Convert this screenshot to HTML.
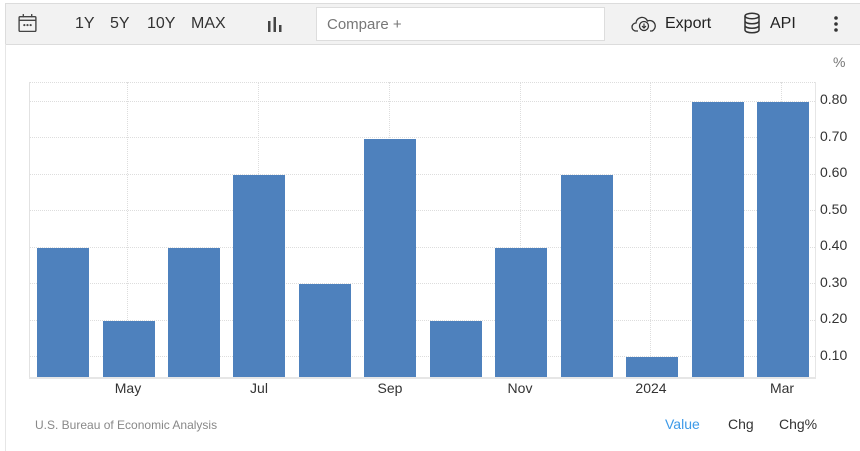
<!DOCTYPE html>
<html><head><meta charset="utf-8"><style>
*{margin:0;padding:0;box-sizing:border-box}
body{width:860px;height:451px;background:#fff;font-family:"Liberation Sans",Arial,sans-serif;position:relative;overflow:hidden}
.a{position:absolute}
.tb{left:5px;top:3px;width:855px;height:42px;background:#f2f2f2;border:1px solid #dcdcdc;border-right:none}
.panel{left:5px;top:44px;width:855px;height:407px;border-left:1px solid #e6e6e6}
.t{font-size:16px;color:#333;top:15px}
.cmp{left:316px;top:7px;width:289px;height:34px;background:#fff;border:1px solid #ddd;font-size:15px;color:#777;padding:8px 10px}
.hg{left:30px;width:785px;height:0;border-top:1px dotted #ddd}
.vg{top:82px;height:296px;width:0;border-left:1px dotted #ddd}
.bar{background:#4e81bd;width:52px}
.yl{left:820px;font-size:14px;color:#333}
.xl{top:380px;font-size:14px;color:#333;width:60px;text-align:center}
</style></head><body>
<div class="a tb"></div>
<div class="a panel"></div>
<svg class="a" style="left:17px;top:13px" width="21" height="21" viewBox="0 0 20 20" fill="none" stroke="#444" stroke-width="1.3"><rect x="2" y="3.5" width="16" height="14" rx="1"/><line x1="2" y1="7" x2="18" y2="7"/><line x1="6" y1="1" x2="6" y2="4"/><line x1="14" y1="1" x2="14" y2="4"/><circle cx="7" cy="11.5" r=".4" fill="#444"/><circle cx="10" cy="11.5" r=".4" fill="#444"/><circle cx="13" cy="11.5" r=".4" fill="#444"/></svg>
<div class="a t" style="left:75px">1Y</div>
<div class="a t" style="left:110px">5Y</div>
<div class="a t" style="left:147px">10Y</div>
<div class="a t" style="left:191px">MAX</div>
<svg class="a" style="left:266px;top:15px" width="18" height="18"><rect x="2" y="6" width="2.5" height="11" fill="#444"/><rect x="7.5" y="2" width="2.5" height="15" fill="#444"/><rect x="13" y="10" width="2.5" height="7" fill="#444"/></svg>
<div class="a cmp">Compare +</div>
<svg class="a" style="left:631px;top:14px" width="26" height="20" viewBox="0 0 26 20" fill="none" stroke="#333" stroke-width="1.3"><path d="M7 17H5a4 4 0 0 1 0-8 6 6 0 0 1 11.5-2A5 5 0 0 1 21 17h-2"/><circle cx="13" cy="12" r="4.5"/><path d="M13 9.5v4M11 12l2 2 2-2" stroke-width="1.2"/></svg>
<div class="a t" style="left:665px;color:#222">Export</div>
<svg class="a" style="left:742px;top:12px" width="20" height="22" viewBox="0 0 20 22" fill="none" stroke="#333" stroke-width="1.5"><ellipse cx="10" cy="4" rx="7" ry="2.8"/><path d="M3 4v14c0 1.6 3 2.8 7 2.8s7-1.2 7-2.8V4M3 9c0 1.6 3 2.8 7 2.8s7-1.2 7-2.8M3 13.5c0 1.6 3 2.8 7 2.8s7-1.2 7-2.8"/></svg>
<div class="a t" style="left:770px;color:#222">API</div>
<svg class="a" style="left:833px;top:15px" width="6" height="18"><circle cx="3" cy="3" r="1.8" fill="#333"/><circle cx="3" cy="9" r="1.8" fill="#333"/><circle cx="3" cy="15" r="1.8" fill="#333"/></svg>

<div class="a" style="left:833px;top:54px;font-size:14px;color:#777">%</div>
<div class="a hg" style="top:82px"></div>
<div class="a hg" style="top:101px"></div>
<div class="a hg" style="top:137px"></div>
<div class="a hg" style="top:174px"></div>
<div class="a hg" style="top:210px"></div>
<div class="a hg" style="top:247px"></div>
<div class="a hg" style="top:283px"></div>
<div class="a hg" style="top:320px"></div>
<div class="a hg" style="top:356px"></div>
<div class="a vg" style="left:29px;border-left:1px solid #e2e2e2"></div>
<div class="a vg" style="left:127px"></div>
<div class="a vg" style="left:258px"></div>
<div class="a vg" style="left:389px"></div>
<div class="a vg" style="left:520px"></div>
<div class="a vg" style="left:650px"></div>
<div class="a vg" style="left:781px"></div>
<div class="a vg" style="left:815px;border-left:1px solid #e6e6e6"></div>

<div class="a bar" style="left:37px;top:248px;height:130px"></div>
<div class="a bar" style="left:103px;top:321px;height:57px"></div>
<div class="a bar" style="left:168px;top:248px;height:130px"></div>
<div class="a bar" style="left:233px;top:175px;height:203px"></div>
<div class="a bar" style="left:299px;top:284px;height:94px"></div>
<div class="a bar" style="left:364px;top:139px;height:239px"></div>
<div class="a bar" style="left:430px;top:321px;height:57px"></div>
<div class="a bar" style="left:495px;top:248px;height:130px"></div>
<div class="a bar" style="left:561px;top:175px;height:203px"></div>
<div class="a bar" style="left:626px;top:357px;height:21px"></div>
<div class="a bar" style="left:692px;top:102px;height:276px"></div>
<div class="a bar" style="left:757px;top:102px;height:276px"></div>
<div class="a" style="left:29px;top:377px;width:787px;height:2px;background:#e6e6e6"></div>

<div class="a yl" style="top:91px">0.80</div>
<div class="a yl" style="top:128px">0.70</div>
<div class="a yl" style="top:164px">0.60</div>
<div class="a yl" style="top:201px">0.50</div>
<div class="a yl" style="top:237px">0.40</div>
<div class="a yl" style="top:274px">0.30</div>
<div class="a yl" style="top:310px">0.20</div>
<div class="a yl" style="top:347px">0.10</div>

<div class="a xl" style="left:98px">May</div>
<div class="a xl" style="left:229px">Jul</div>
<div class="a xl" style="left:360px">Sep</div>
<div class="a xl" style="left:490px">Nov</div>
<div class="a xl" style="left:621px">2024</div>
<div class="a xl" style="left:752px">Mar</div>

<div class="a" style="left:35px;top:418px;font-size:12px;color:#888">U.S. Bureau of Economic Analysis</div>
<div class="a" style="left:665px;top:416px;font-size:14px;color:#3d9ae8">Value</div>
<div class="a" style="left:728px;top:416px;font-size:14px;color:#333">Chg</div>
<div class="a" style="left:779px;top:416px;font-size:14px;color:#333">Chg%</div>
</body></html>
